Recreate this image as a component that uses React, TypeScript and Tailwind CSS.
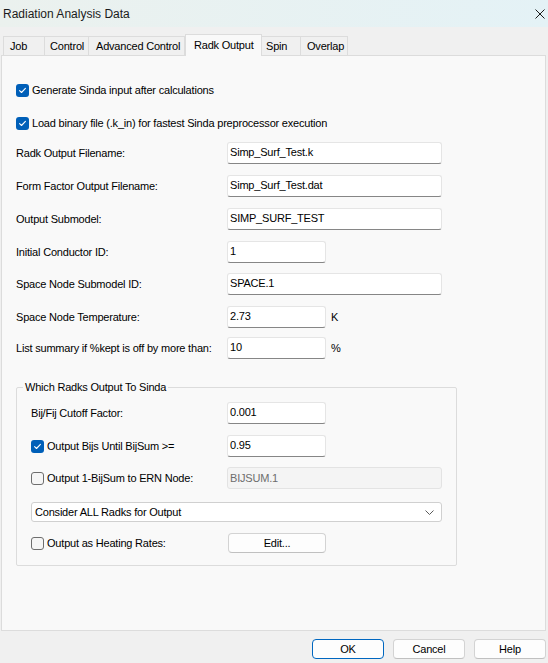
import React from 'react';

const tabs = [
  { label: 'Job', w: 'w-[42px]', pl: 'pl-[6px]' },
  { label: 'Control', w: 'w-[44px]', pl: 'pl-[5px]' },
  { label: 'Advanced Control', w: 'w-[96px]', pl: 'pl-[7px]' },
  { label: 'Radk Output', w: 'w-[77px]', pl: 'pl-[8px]', active: true },
  { label: 'Spin', w: 'w-[39px]', pl: 'pl-[4px]' },
  { label: 'Overlap', w: 'w-[47px]', pl: 'pl-[6px]' },
];

function Check({ checked }: { checked?: boolean }) {
  if (checked) {
    return (
      <span className="flex h-[13px] w-[13px] shrink-0 items-center justify-center rounded-[3px] bg-[#005fb8]">
        <svg width="9" height="9" viewBox="0 0 9 9" fill="none">
          <path d="M1.6 4.7 L3.5 6.5 L7.4 2.4" stroke="white" strokeWidth="1.1" strokeLinecap="round" strokeLinejoin="round" />
        </svg>
      </span>
    );
  }
  return <span className="h-[13px] w-[13px] shrink-0 rounded-[3px] border border-[#6e6e6e] bg-[#f6f6f6]" />;
}

function Field({ value, wide, disabled }: { value: string; wide?: boolean; disabled?: boolean }) {
  const w = wide ? 'w-[215px]' : 'w-[99px]';
  if (disabled) {
    return (
      <div className={`${w} flex h-[22px] items-center rounded-[3px] border border-[#e3e3e3] bg-[#f4f4f4] px-[2px] text-[#6d6d6d]`}>
        {value}
      </div>
    );
  }
  return (
    <div className={`${w} flex h-[22px] items-center rounded-[3px] border border-[#e5e5e5] border-b-[#868686] bg-white px-[2px] pb-[1px]`}>
      {value}
    </div>
  );
}

function Row({ label, value, wide, unit, mt }: { label: string; value: string; wide?: boolean; unit?: string; mt: string }) {
  return (
    <div className={`flex h-[22px] items-center ${mt}`}>
      <span className="w-[211px] shrink-0">{label}</span>
      <Field value={value} wide={wide} />
      {unit && <span className="ml-[5px]">{unit}</span>}
    </div>
  );
}

function Button({ label, primary }: { label: string; primary?: boolean }) {
  return (
    <button
      className={`flex h-[20px] w-[72px] items-center justify-center rounded-[4px] border bg-[#fdfdfd] ${
        primary ? 'border-[#0067c0]' : 'border-[#d3d3d3] border-b-[#c0c0c0]'
      }`}
    >
      {label}
    </button>
  );
}

export default function App() {
  return (
    <div className="flex h-[663px] w-[548px] flex-col overflow-hidden bg-[#f0f0f0] font-['Liberation_Sans',Arial,sans-serif] text-[11px] tracking-[-0.2px] text-black">
      <div className="flex h-[27px] shrink-0 items-center justify-between bg-linear-to-r from-[#ebf1ee] to-[#e4f2f6] pl-[3px] pr-[3px]">
        <span className="text-[12px] tracking-normal text-[#1b1b1b]">Radiation Analysis Data</span>
        <svg width="10" height="10" viewBox="0 0 10 10" fill="none">
          <path d="M0.5 0.5 L9.5 9.5 M9.5 0.5 L0.5 9.5" stroke="#1b1b1b" strokeWidth="1" />
        </svg>
      </div>

      <div className="flex h-[28px] shrink-0 items-end pl-[3px]">
        {tabs.map((t, i) =>
          t.active ? (
            <div
              key={t.label}
              className={`relative z-10 -mb-px flex h-[22px] ${t.w} ${t.pl} items-center border border-b-0 border-[#dcdcdc] bg-[#f9f9f9] pb-[1px]`}
            >
              {t.label}
            </div>
          ) : (
            <div
              key={t.label}
              className={`flex h-[19px] ${t.w} ${t.pl} items-center border-t border-r border-[#dcdcdc] ${i === 0 ? 'border-l' : ''} bg-[#f0f0f0]`}
            >
              {t.label}
            </div>
          )
        )}
      </div>

      <div className="ml-[1px] flex h-[576px] w-[545px] shrink-0 flex-col border border-[#dcdcdc] bg-[#f9f9f9] pl-[14px] pt-[23px]">
        <div className="flex h-[22px] items-center gap-[3px]">
          <Check checked />
          <span>Generate Sinda input after calculations</span>
        </div>
        <div className="mt-[11px] flex h-[22px] items-center gap-[3px]">
          <Check checked />
          <span>Load binary file (.k_in) for fastest Sinda preprocessor execution</span>
        </div>

        <Row mt="mt-[8px]" label="Radk Output Filename:" value="Simp_Surf_Test.k" wide />
        <Row mt="mt-[11px]" label="Form Factor Output Filename:" value="Simp_Surf_Test.dat" wide />
        <Row mt="mt-[11px]" label="Output Submodel:" value="SIMP_SURF_TEST" wide />
        <Row mt="mt-[11px]" label="Initial Conductor ID:" value="1" />
        <Row mt="mt-[10px]" label="Space Node Submodel ID:" value="SPACE.1" wide />
        <Row mt="mt-[11px]" label="Space Node Temperature:" value="2.73" unit="K" />
        <Row mt="mt-[9px]" label="List summary if %kept is off by more than:" value="10" unit="%" />

        <fieldset className="mt-[21px] w-[441px] rounded-[2px] border border-[#dcdcdc] pb-[12px] pl-[14px] pt-[8px]">
          <legend className="-ml-[8px] px-[2px] leading-[14px]">Which Radks Output To Sinda</legend>

          <div className="flex h-[22px] items-center">
            <span className="w-[196px] shrink-0">Bij/Fij Cutoff Factor:</span>
            <Field value="0.001" />
          </div>
          <div className="mt-[11px] flex h-[22px] items-center">
            <span className="flex w-[196px] shrink-0 items-center gap-[3px]">
              <Check checked />
              Output Bijs Until BijSum &gt;=
            </span>
            <Field value="0.95" />
          </div>
          <div className="mt-[10px] flex h-[22px] items-center">
            <span className="flex w-[196px] shrink-0 items-center gap-[3px]">
              <Check />
              Output 1-BijSum to ERN Node:
            </span>
            <Field value="BIJSUM.1" wide disabled />
          </div>
          <div className="mt-[13px] flex h-[20px] w-[411px] items-center justify-between rounded-[3px] border border-[#d0d0d0] bg-white pl-[3px] pr-[7px]">
            <span>Consider ALL Radks for Output</span>
            <svg width="9" height="5" viewBox="0 0 9 5" fill="none">
              <path d="M0.5 0.5 L4.5 4.5 L8.5 0.5" stroke="#5a5a5a" strokeWidth="1" />
            </svg>
          </div>
          <div className="mt-[11px] flex h-[20px] items-center">
            <span className="flex w-[197px] shrink-0 items-center gap-[3px]">
              <Check />
              Output as Heating Rates:
            </span>
            <button className="flex h-[20px] w-[98px] items-center justify-center rounded-[4px] border border-[#d3d3d3] border-b-[#c0c0c0] bg-[#fdfdfd]">
              Edit...
            </button>
          </div>
        </fieldset>
      </div>

      <div className="mt-[8px] flex justify-end gap-[9px] pr-[2px]">
        <Button label="OK" primary />
        <Button label="Cancel" />
        <Button label="Help" />
      </div>
    </div>
  );
}
